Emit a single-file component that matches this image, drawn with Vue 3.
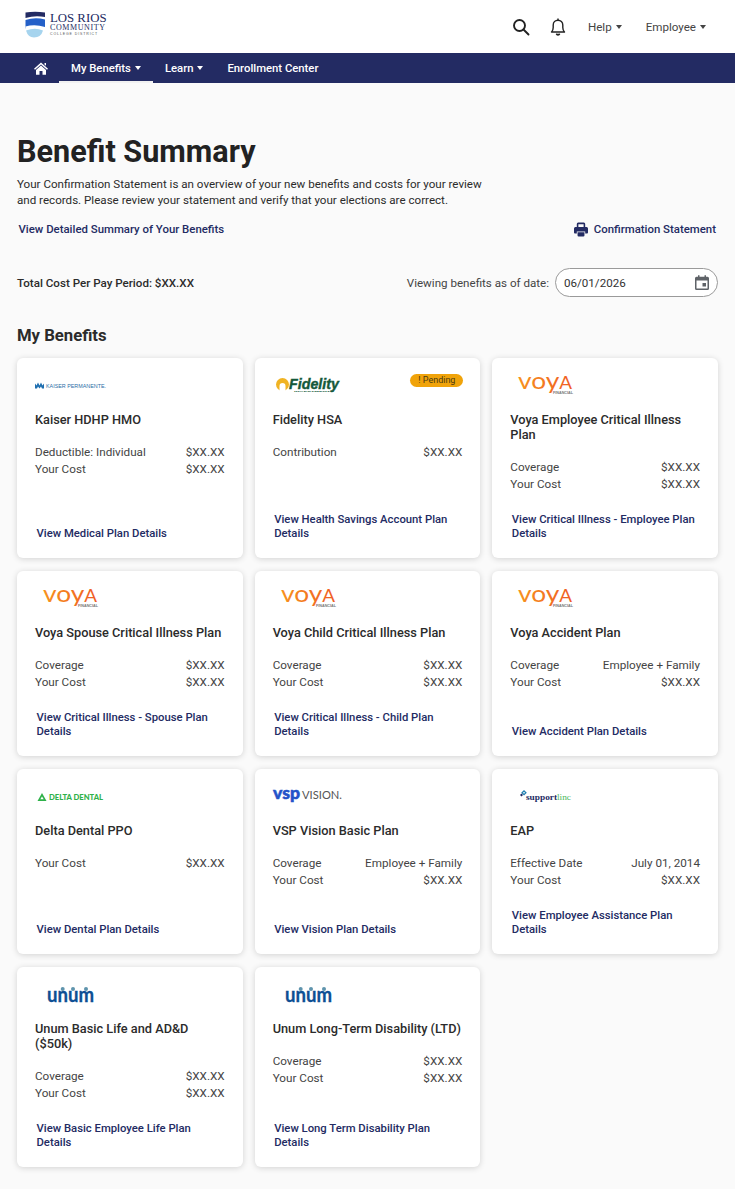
<template>
  <div class="page">
    <header class="top-bar">
      <div class="brand">
        <svg class="brand-mark" width="21" height="28" viewBox="0 0 21 28">
          <path d="M0.500 1.500 Q10 0 20 1.500 V6 Q10 4 0.500 7Z" fill="#232b63" />
          <path d="M0.500 9 Q10 6 20 8.500 V17 Q10 14 0.500 17.500Z" fill="#2460c8" />
          <path d="M0.500 15.500 Q10 13 20 16 V17.500 Q10 15 0.500 18.500Z" fill="#ffffff" />
          <path d="M1 19.500 Q10 16 18 19.500 Q16 26.500 9 26.500 Q3 26.500 1 19.500Z" fill="#a6d4ee" />
        </svg>
        <div class="brand-text">
          <span class="brand-los">LOS RIOS</span>
          <span class="brand-comm">COMMUNITY</span>
          <span class="brand-coll">COLLEGE DISTRICT</span>
        </div>
      </div>
      <div class="top-actions">
        <svg class="icon-search" width="18" height="18" viewBox="0 0 18 18" fill="none" stroke="#222" stroke-width="1.900">
          <circle cx="7.500" cy="7.500" r="5.500" />
          <path d="M11.500 11.500 L16.500 16.500" stroke-linecap="round" />
        </svg>
        <svg class="icon-bell" width="16" height="18" viewBox="0 0 16 18" fill="none" stroke="#222" stroke-width="1.400">
          <path d="M1.500 14 Q3.200 12.500 3.200 9.500 V7 A4.800 4.800 0 0 1 12.800 7 V9.500 Q12.800 12.500 14.500 14Z" stroke-linejoin="round" />
          <path d="M8 0.500 V2" />
          <path d="M6.300 15.800 A1.800 1.800 0 0 0 9.700 15.800" fill="#222" />
        </svg>
        <span class="top-link help">Help<i class="caret"></i></span>
        <span class="top-link">Employee<i class="caret"></i></span>
      </div>
    </header>

    <nav class="main-nav">
      <svg class="icon-home" width="14" height="13" viewBox="0 0 14 13">
        <path d="M7 0.500 L14 6.800 L13 7.800 L7 2.500 L1 7.800 L0 6.800Z M2 8 L7 3.600 L12 8 V12.800 H8.500 V9 H5.500 V12.800 H2Z M10.500 1 H12 V3.800 L10.500 2.500Z" fill="#fff" />
      </svg>
      <span class="nav-item active">My Benefits<i class="caret"></i></span>
      <span class="nav-item">Learn<i class="caret"></i></span>
      <span class="nav-item">Enrollment Center</span>
    </nav>

    <main class="content">
      <h1>Benefit Summary</h1>
      <p class="intro">
        Your Confirmation Statement is an overview of your new benefits and costs for your review<br />
        and records. Please review your statement and verify that your elections are correct.
      </p>

      <div class="link-row">
        <a class="link detail-link">View Detailed Summary of Your Benefits</a>
        <a class="link print-link">
          <svg width="14" height="15" viewBox="0 0 15 15" preserveAspectRatio="none">
            <path d="M3 5.500 V2 Q3 0.500 4.500 0.500 H10.500 Q12 0.500 12 2 V5.500 H10.300 V2.200 H4.700 V5.500Z M1.500 5 H13.500 Q15 5 15 6.500 V10.500 Q15 11.500 14 11.500 H12 V9.500 H3 V11.500 H1 Q0 11.500 0 10.500 V6.500 Q0 5 1.500 5Z M3.800 10.300 H11.200 V13.500 Q11.200 14.600 10 14.600 H5 Q3.800 14.600 3.800 13.500Z" fill="#232b63" />
          </svg>
          Confirmation Statement
        </a>
      </div>

      <div class="cost-row">
        <span class="total">Total Cost Per Pay Period: $XX.XX</span>
        <div class="date-wrap">
          <label>Viewing benefits as of date:</label>
          <div class="date-input">
            06/01/2026
            <svg width="14" height="15" viewBox="0 0 14 15" fill="#5f6368">
              <path d="M1.500 1.800 H3 V0.300 H4.500 V1.800 H9.500 V0.300 H11 V1.800 H12.500 Q14 1.800 14 3.300 V13.500 Q14 15 12.500 15 H1.500 Q0 15 0 13.500 V3.300 Q0 1.800 1.500 1.800Z M1.500 5.500 V13.500 H12.500 V5.500Z M7.500 8 H11 V11.500 H7.500Z" fill-rule="evenodd" />
            </svg>
          </div>
        </div>
      </div>

      <h2>My Benefits</h2>

      <section class="cards">
        <article v-for="card in cards" :key="card.title" class="card">
          <span v-if="card.pending" class="badge">! Pending</span>
          <div class="logo">
            <svg v-if="card.logo === 'kaiser'" width="120" height="26" viewBox="0 0 120 26">
              <path d="M0 16.500 V11.500 L1.500 13.500 L3 10.500 L4.500 13.500 L6 10.500 L7.500 13.500 L9 11.500 V16.500 H7 L6 14.500 L4.500 16.500 L3 14.500 L2 16.500Z" fill="#1f6fb0" />
              <text x="11" y="16.300" class="kaiser-text" textLength="60" lengthAdjust="spacingAndGlyphs">KAISER PERMANENTE.</text>
            </svg>
            <svg v-else-if="card.logo === 'fidelity'" width="120" height="26" viewBox="0 0 120 26">
              <circle cx="9.500" cy="12.500" r="6.500" fill="#f0b323" />
              <path d="M6.500 19 V14 A3 3 0 0 1 12.500 14 V19Z" fill="#fff" />
              <text x="16" y="17" class="fidelity-text" textLength="50" lengthAdjust="spacingAndGlyphs">Fidelity</text>
              <text x="21" y="20" class="fidelity-sub" textLength="40" lengthAdjust="spacingAndGlyphs">INVESTMENTS</text>
            </svg>
            <svg v-else-if="card.logo === 'voya'" width="120" height="26" viewBox="0 0 120 26">
              <defs>
                <linearGradient id="voya-grad" x1="0" x2="1" y1="0" y2="0">
                  <stop offset="0" stop-color="#f7921e" />
                  <stop offset="1" stop-color="#ef5b25" />
                </linearGradient>
              </defs>
              <text x="8" y="17" class="voya-text" textLength="54" lengthAdjust="spacingAndGlyphs" fill="url(#voya-grad)">voy<tspan class="voya-cap">A</tspan></text>
              <text x="43" y="21.500" class="voya-sub" textLength="20" lengthAdjust="spacingAndGlyphs">FINANCIAL</text>
            </svg>
            <svg v-else-if="card.logo === 'delta'" width="120" height="26" viewBox="0 0 120 26">
              <path d="M7 10 L11.500 18 H2.500Z M7 13.500 L5.300 16.200 H8.700Z" fill="#2fb14a" fill-rule="evenodd" />
              <text x="14" y="17.300" class="delta-text" textLength="54" lengthAdjust="spacingAndGlyphs">DELTA DENTAL</text>
            </svg>
            <svg v-else-if="card.logo === 'vsp'" width="120" height="26" viewBox="0 0 120 26">
              <text x="0" y="16" class="vsp-text" textLength="27" lengthAdjust="spacingAndGlyphs">vsp</text>
              <text x="29" y="16" class="vision-text" textLength="40" lengthAdjust="spacingAndGlyphs">VISION.</text>
            </svg>
            <svg v-else-if="card.logo === 'support'" width="120" height="26" viewBox="0 0 120 26">
              <path d="M14 7 L16.800 9.800 L14 12.600 L11.200 9.800Z M14 8.800 L13 9.800 L14 10.800 L15 9.800Z" fill="#1f7fb0" fill-rule="evenodd" />
              <path d="M11.500 10.500 L13 12 L11.500 13.500 L10 12Z" fill="#232b63" />
              <text x="16" y="17" class="support-text" textLength="31" lengthAdjust="spacingAndGlyphs">support</text>
              <text x="47" y="17" class="linc-text" textLength="14" lengthAdjust="spacingAndGlyphs">linc</text>
            </svg>
            <svg v-else-if="card.logo === 'unum'" width="120" height="26" viewBox="0 0 120 26">
              <circle cx="27.700" cy="8" r="2" fill="#5f94ad" />
              <circle cx="38" cy="8" r="2" fill="#5f94ad" />
              <circle cx="51" cy="8" r="2" fill="#5f94ad" />
              <text x="12" y="21" class="unum-text" textLength="47" lengthAdjust="spacingAndGlyphs">unum</text>
            </svg>
          </div>
          <h3>{{ card.title }}</h3>
          <div class="rows">
            <div v-for="row in card.rows" :key="row[0]" class="row">
              <span>{{ row[0] }}</span>
              <span>{{ row[1] }}</span>
            </div>
          </div>
          <a class="link card-link">{{ card.link }}</a>
        </article>
      </section>
    </main>
  </div>
</template>

<script setup>
const cost = '$XX.XX'

const cards = [
  { logo: 'kaiser', title: 'Kaiser HDHP HMO', rows: [['Deductible: Individual', cost], ['Your Cost', cost]], link: 'View Medical Plan Details' },
  { logo: 'fidelity', title: 'Fidelity HSA', pending: true, rows: [['Contribution', cost]], link: 'View Health Savings Account Plan Details' },
  { logo: 'voya', title: 'Voya Employee Critical Illness Plan', rows: [['Coverage', cost], ['Your Cost', cost]], link: 'View Critical Illness - Employee Plan Details' },
  { logo: 'voya', title: 'Voya Spouse Critical Illness Plan', rows: [['Coverage', cost], ['Your Cost', cost]], link: 'View Critical Illness - Spouse Plan Details' },
  { logo: 'voya', title: 'Voya Child Critical Illness Plan', rows: [['Coverage', cost], ['Your Cost', cost]], link: 'View Critical Illness - Child Plan Details' },
  { logo: 'voya', title: 'Voya Accident Plan', rows: [['Coverage', 'Employee + Family'], ['Your Cost', cost]], link: 'View Accident Plan Details' },
  { logo: 'delta', title: 'Delta Dental PPO', rows: [['Your Cost', cost]], link: 'View Dental Plan Details' },
  { logo: 'vsp', title: 'VSP Vision Basic Plan', rows: [['Coverage', 'Employee + Family'], ['Your Cost', cost]], link: 'View Vision Plan Details' },
  { logo: 'support', title: 'EAP', rows: [['Effective Date', 'July 01, 2014'], ['Your Cost', cost]], link: 'View Employee Assistance Plan Details' },
  { logo: 'unum', title: 'Unum Basic Life and AD&D ($50k)', rows: [['Coverage', cost], ['Your Cost', cost]], link: 'View Basic Employee Life Plan Details' },
  { logo: 'unum', title: 'Unum Long-Term Disability (LTD)', rows: [['Coverage', cost], ['Your Cost', cost]], link: 'View Long Term Disability Plan Details' },
]
</script>

<style>
html, body {
  margin: 0;
  background: #fafafa;
}
</style>

<style scoped>
.page {
  font-family: Roboto, "Liberation Sans", sans-serif;
  color: #2b2b2b;
  background: #fafafa;
  min-height: 1189px;
}
.top-bar {
  height: 53px;
  background: #fff;
  display: flex;
  align-items: center;
  justify-content: space-between;
  padding: 0 29px 0 25px;
}
.brand {
  display: flex;
  align-items: center;
  gap: 4px;
  margin-bottom: 3px;
}
.brand-text {
  display: flex;
  flex-direction: column;
  font-family: "Liberation Serif", serif;
  color: #232b63;
}
.brand-los {
  font-size: 12.8px;
  line-height: 11px;
}
.brand-comm {
  font-size: 8px;
  letter-spacing: 0.6px;
  line-height: 8px;
}
.brand-coll {
  font-family: "Liberation Sans", sans-serif;
  font-size: 3.5px;
  letter-spacing: 0.9px;
  line-height: 5px;
  color: #555;
}
.top-actions {
  display: flex;
  align-items: center;
}
.icon-search {
  margin-right: 20px;
}
.icon-bell {
  margin-right: 22px;
}
.top-link {
  font-size: 11.6px;
  color: #444;
  display: flex;
  align-items: center;
}
.help {
  margin-right: 24px;
}
.caret {
  display: inline-block;
  margin-left: 4px;
  border-top: 4px solid currentColor;
  border-left: 3px solid transparent;
  border-right: 3px solid transparent;
}
.main-nav {
  height: 30px;
  background: #232b63;
  display: flex;
  align-items: center;
  padding-left: 34px;
  color: #fff;
}
.icon-home {
  margin-right: 11px;
}
.nav-item {
  font-size: 11.3px;
  font-weight: 500;
  height: 30px;
  padding: 0 12px;
  box-sizing: border-box;
  display: flex;
  align-items: center;
}
.nav-item.active {
  border-bottom: 2px solid #f1f1f1;
  padding-top: 2px;
}
.content {
  padding: 0 17px;
}
h1 {
  margin: 0;
  padding-top: 50px;
  font-size: 30.6px;
  line-height: 38px;
  font-weight: 700;
  color: #222;
}
.intro {
  margin: 5px 0 0;
  font-size: 11.6px;
  line-height: 16px;
  color: #2b2b2b;
}
.link {
  color: #232b63;
  font-weight: 500;
  font-size: 11.4px;
}
.link-row {
  display: flex;
  justify-content: space-between;
  align-items: center;
  margin-top: 12px;
  height: 18px;
  padding: 0 2px 0 1.500px;
}
.print-link {
  display: flex;
  align-items: center;
  gap: 6px;
}
.cost-row {
  display: flex;
  justify-content: space-between;
  align-items: center;
  margin-top: 30px;
  height: 30px;
}
.total {
  font-size: 11.6px;
  font-weight: 500;
}
.date-wrap {
  display: flex;
  align-items: center;
  gap: 6px;
  font-size: 11.6px;
  color: #444;
}
.date-input {
  width: 163px;
  height: 29px;
  margin-top: -1px;
  box-sizing: border-box;
  border: 1px solid #9a9a9a;
  border-radius: 15px;
  background: #fff;
  padding: 0 8px;
  display: flex;
  align-items: center;
  justify-content: space-between;
  color: #333;
}
h2 {
  margin: 27px 0 0;
  font-size: 16.7px;
  line-height: 22px;
  font-weight: 700;
  color: #2b2b2b;
}
.cards {
  margin-top: 11px;
  display: grid;
  grid-template-columns: repeat(3, 1fr);
  gap: 13px 12px;
  padding-bottom: 22px;
}
.card {
  position: relative;
  background: #fff;
  border-radius: 6px;
  box-shadow: 0 1px 6px rgba(0, 0, 0, 0.16);
  padding: 14px 18px 17px;
  display: flex;
  flex-direction: column;
}
.badge {
  position: absolute;
  top: 16px;
  right: 17px;
  width: 53px;
  height: 13px;
  border-radius: 7px;
  background: #f0a30a;
  color: #4a3a10;
  font-size: 9px;
  line-height: 13px;
  text-align: center;
}
.logo {
  height: 26px;
  margin-bottom: 14px;
}
.logo svg {
  display: block;
  overflow: visible;
}
h3 {
  margin: 0 0 17px;
  font-size: 12.75px;
  line-height: 15px;
  font-weight: 500;
  color: #2b2b2b;
}
.row {
  display: flex;
  justify-content: space-between;
  font-size: 11.7px;
  line-height: 17px;
  color: #444;
}
.card-link {
  display: block;
  margin-top: auto;
  padding: 20px 0 0 1.500px;
  font-size: 11.3px;
  line-height: 14px;
}
.kaiser-text {
  font: 6px "Liberation Sans", sans-serif;
  fill: #2b6ea6;
}
.fidelity-text {
  font: italic 700 15px "Liberation Sans", sans-serif;
  fill: #14583a;
  stroke: #14583a;
  stroke-width: 0.4px;
}
.fidelity-sub {
  font: 700 2.500px "Liberation Sans", sans-serif;
  fill: #14583a;
}
.voya-text {
  font: 400 23px Lato, sans-serif;
}
.voya-cap {
  font-size: 16.5px;
}
.voya-sub {
  font: 700 3px "Liberation Sans", sans-serif;
  fill: #777;
}
.delta-text {
  font: 900 8px Lato, sans-serif;
  fill: #2fb14a;
}
.vsp-text {
  font: 900 16px Lato, sans-serif;
  fill: #2353c9;
  stroke: #2353c9;
  stroke-width: 0.5px;
}
.vision-text {
  font: 400 11px Lato, sans-serif;
  fill: #555;
}
.support-text {
  font: 700 9px "Liberation Serif", serif;
  fill: #232b63;
}
.linc-text {
  font: 400 9px "Liberation Serif", serif;
  fill: #4cb85c;
}
.unum-text {
  font: 700 20px Lato, sans-serif;
  fill: #0d4f94;
  stroke: #0d4f94;
  stroke-width: 0.3px;
}
</style>
